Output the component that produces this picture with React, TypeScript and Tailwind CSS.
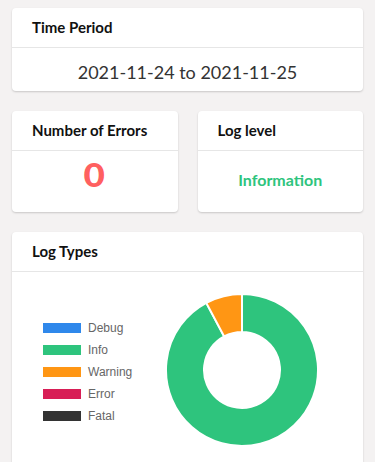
import React from "react";

const legend = [
  { label: "Debug", color: "#2f88eb" },
  { label: "Info", color: "#2ec47d" },
  { label: "Warning", color: "#ff9614" },
  { label: "Error", color: "#d81e56" },
  { label: "Fatal", color: "#333333" },
];

function arcPath(cx: number, cy: number, R: number, r: number, a0: number, a1: number) {
  const rad = (a: number) => ((a - 90) * Math.PI) / 180;
  const p = (rr: number, a: number) => [cx + rr * Math.cos(rad(a)), cy + rr * Math.sin(rad(a))];
  const large = a1 - a0 > 180 ? 1 : 0;
  const [x0, y0] = p(R, a0);
  const [x1, y1] = p(R, a1);
  const [x2, y2] = p(r, a1);
  const [x3, y3] = p(r, a0);
  return `M${x0} ${y0} A${R} ${R} 0 ${large} 1 ${x1} ${y1} L${x2} ${y2} A${r} ${r} 0 ${large} 0 ${x3} ${y3} Z`;
}

function Donut() {
  const cx = 78, cy = 78, R = 76, r = 38;
  return (
    <svg width="156" height="156" viewBox="0 0 156 156">
      <path d={arcPath(cx, cy, R, r, 0, 332)} fill="#2ec47d" stroke="#fff" strokeWidth="2" />
      <path d={arcPath(cx, cy, R, r, 332, 360)} fill="#ff9614" stroke="#fff" strokeWidth="2" />
    </svg>
  );
}

function Card({ title, children, className = "" }: { title: string; children: React.ReactNode; className?: string }) {
  return (
    <div className={`bg-white rounded-[4px] shadow-[0_1px_2px_rgba(0,0,0,0.18)] ${className}`}>
      <div className="h-10 flex items-center px-5 border-b border-[#e6e6e6] text-[15px] font-bold text-[#111] leading-none">
        {title}
      </div>
      {children}
    </div>
  );
}

export default function App() {
  return (
    <div
      className="min-h-[462px] bg-[#f4f2f2] px-3 pt-2 pb-6 flex flex-col gap-5"
      style={{ fontFamily: "Lato, 'Open Sans', sans-serif" }}
    >
      <Card title="Time Period">
        <div className="h-[43px] pt-[13px] text-center text-[18px] leading-[22px] text-[#333]">
          2021-11-24 to 2021-11-25
        </div>
      </Card>

      <div className="grid grid-cols-2 gap-5">
        <Card title="Number of Errors">
          <div className="h-[61px] pt-[6px] text-center text-[32px] leading-[36px] font-black text-[#ff6060]">
            <span className="inline-block scale-x-[1.15]">0</span>
          </div>
        </Card>
        <Card title="Log level">
          <div className="h-[61px] pt-[19px] text-center text-[16px] leading-[19px] font-bold text-[#2ec47d]">
            Information
          </div>
        </Card>
      </div>

      <Card title="Log Types">
        <div className="flex items-center pt-[20px] pb-[20px] pl-[31px]">
          <div
            className="flex flex-col gap-[6px] w-[121px] pt-[3px]"
            style={{ fontFamily: "'Liberation Sans', Arial, sans-serif" }}
          >
            {legend.map((l) => (
              <div key={l.label} className="flex items-center h-4">
                <span className="w-[38px] h-[10px] mr-[7px]" style={{ backgroundColor: l.color }} />
                <span className="text-[12px] text-[#666]">{l.label}</span>
              </div>
            ))}
          </div>
          <Donut />
        </div>
      </Card>
    </div>
  );
}
